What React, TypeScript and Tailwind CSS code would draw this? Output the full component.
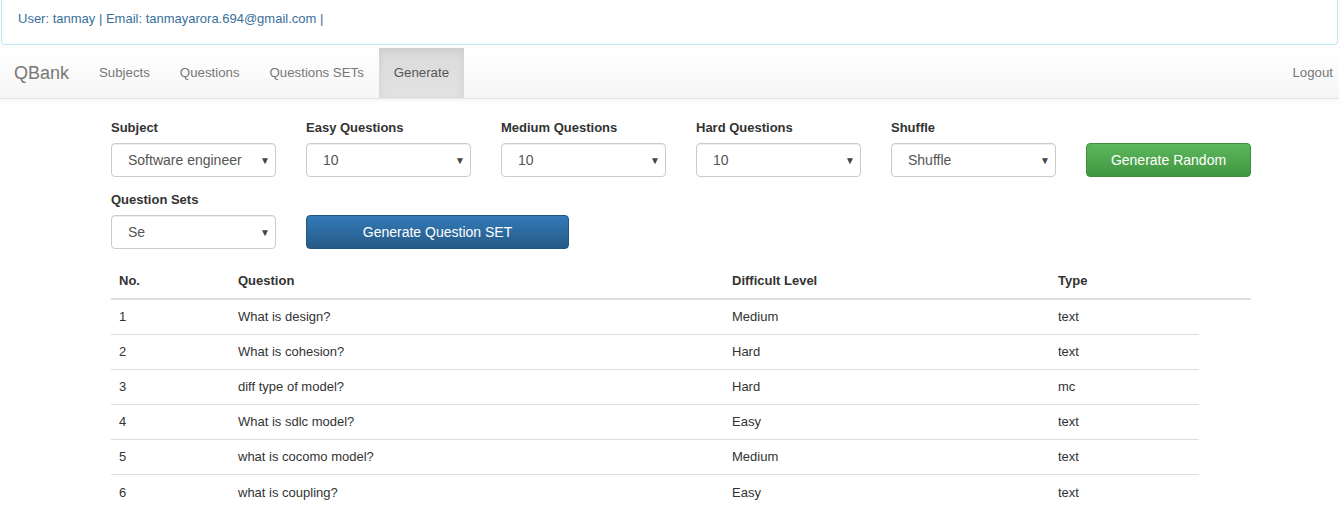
import React from "react";

const font = { fontFamily: '"Liberation Sans", Arial, sans-serif' };

function Select({ value }: { value: string }) {
  return (
    <div className="relative h-[34px] w-[165px] rounded-[4px] border border-[#ccc] bg-white shadow-[inset_0_1px_1px_rgba(0,0,0,0.075)] flex items-center">
      <span className="pl-[16px] text-[14px] text-[#555]">{value}</span>
      <span className="absolute right-[5px] top-[9px] text-[10px] text-[#444]">▼</span>
    </div>
  );
}

function Field({ label, value }: { label: string; value: string }) {
  return (
    <div className="flex flex-col w-[165px]">
      <div className="text-[13px] font-bold text-[#333] h-[15px] leading-[15px] mb-[8px]">{label}</div>
      <Select value={value} />
    </div>
  );
}

const rows = [
  ["1", "What is design?", "Medium", "text"],
  ["2", "What is cohesion?", "Hard", "text"],
  ["3", "diff type of model?", "Hard", "mc"],
  ["4", "What is sdlc model?", "Easy", "text"],
  ["5", "what is cocomo model?", "Medium", "text"],
  ["6", "what is coupling?", "Easy", "text"],
];

export default function App() {
  return (
    <div style={font} className="w-[1339px] h-[522px] bg-white overflow-hidden text-[#333]">
      <div className="h-[45px] border border-t-0 border-[#bce8f1] rounded-b-[4px] mx-[1px] flex items-center pl-[16px] pb-[6px] text-[13px] text-[#3a6f9a]">
        User: tanmay | Email: tanmayarora.694@gmail.com |
      </div>
      <div className="mt-[3px] h-[51px] flex items-stretch bg-gradient-to-b from-white to-[#f6f6f6] border-b border-[#e5e5e5] shadow-[0_1px_5px_rgba(0,0,0,0.06)]">
        <div className="pl-[14px] pr-[15px] flex items-center text-[18px] text-[#777]">QBank</div>
        <div className="px-[15px] flex items-center text-[13.25px] text-[#777]">Subjects</div>
        <div className="px-[15px] flex items-center text-[13.25px] text-[#777]">Questions</div>
        <div className="px-[15px] flex items-center text-[13.25px] text-[#777]">Questions SETs</div>
        <div className="px-[15px] flex items-center text-[13.25px] text-[#555] bg-gradient-to-b from-[#dbdbdb] to-[#e2e2e2] shadow-[inset_0_3px_9px_rgba(0,0,0,0.075)]">Generate</div>
        <div className="flex-1" />
        <div className="pr-[6px] flex items-center text-[13.25px] text-[#777]">Logout</div>
      </div>
      <div className="pl-[111px] pt-[21px]">
        <div className="flex gap-[30px]">
          <Field label="Subject" value="Software engineer" />
          <Field label="Easy Questions" value="10" />
          <Field label="Medium Questions" value="10" />
          <Field label="Hard Questions" value="10" />
          <Field label="Shuffle" value="Shuffle" />
          <div className="flex flex-col w-[165px] justify-end">
            <div className="h-[34px] rounded-[4px] border border-[#3e8f3e] bg-gradient-to-b from-[#5cb85c] to-[#419641] text-white text-[14px] flex items-center justify-center">
              Generate Random
            </div>
          </div>
        </div>
        <div className="flex gap-[30px] mt-[15px]">
          <Field label="Question Sets" value="Se" />
          <div className="flex flex-col justify-end">
            <div className="h-[34px] w-[263px] rounded-[4px] border border-[#245580] bg-gradient-to-b from-[#337ab7] to-[#265a88] text-white text-[14px] flex items-center justify-center">
              Generate Question SET
            </div>
          </div>
        </div>
        <div className="mt-[1px] w-[1140px] text-[13px]">
          <div className="flex h-[50px] items-center pt-[13px] border-b-2 border-[#ddd] font-bold">
            <div className="w-[119px] pl-[8px]">No.</div>
            <div className="w-[494px] pl-[8px]">Question</div>
            <div className="w-[326px] pl-[8px]">Difficult Level</div>
            <div className="pl-[8px]">Type</div>
          </div>
          {rows.map((r, i) => (
            <div key={i} className={"flex h-[35px] items-center w-[1088px] " + (i < rows.length - 1 ? "border-b border-[#ddd]" : "")}>
              <div className="w-[119px] pl-[8px]">{r[0]}</div>
              <div className="w-[494px] pl-[8px]">{r[1]}</div>
              <div className="w-[326px] pl-[8px]">{r[2]}</div>
              <div className="pl-[8px]">{r[3]}</div>
            </div>
          ))}
        </div>
      </div>
    </div>
  );
}
